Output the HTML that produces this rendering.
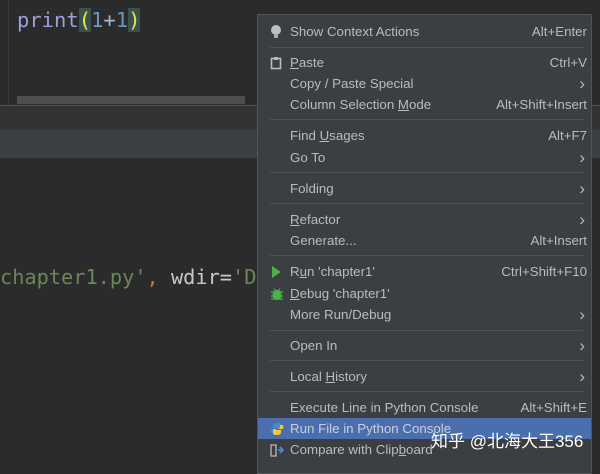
<html><head><style>
body{margin:0;width:600px;height:465px;overflow:hidden;background:#2b2b2b;position:relative;font-family:"Liberation Sans",sans-serif}
.mono{font-family:"DejaVu Sans Mono","Liberation Mono",monospace;position:absolute}
#menu{position:absolute;left:257px;top:14px;width:335px;height:460px;background:#3c3f41;border:1px solid #515355;box-sizing:border-box}
.it{position:absolute;left:0;width:333px;height:21px;line-height:21px;color:#bbbbbb;font-size:13.3px}
.it .t{position:absolute;left:32px}
.it .s{position:absolute;right:4px}
.it .a{position:absolute;right:6px;font-size:17px;top:0px}
.sep{position:absolute;left:12px;right:8px;height:1px;background:#515355}
.ic{position:absolute;left:12px;top:4px}
u{text-decoration:underline}
</style></head><body>
<div style="position:absolute;left:0;top:0;width:600px;height:105px;background:#2b2b2b"></div>
<div style="position:absolute;left:8px;top:0;width:1px;height:105px;background:#3a3a3a"></div>
<div style="position:absolute;left:17px;top:96px;width:228px;height:8px;background:#4e4e4e"></div>
<div style="position:absolute;left:0;top:105px;width:600px;height:1px;background:#555"></div>
<div style="position:absolute;left:0;top:106px;width:600px;height:24px;background:#313335"></div>
<div style="position:absolute;left:0;top:130px;width:600px;height:28px;background:#3c3f41"></div>
<div class="mono" style="left:17px;top:8px;font-size:20.5px;color:#9e9edb;white-space:pre">print<span style="color:#e8e843;background:#3b514d">(</span><span style="color:#6897bb">1</span><span style="color:#a9b7c6">+</span><span style="color:#6897bb">1</span><span style="color:#e8e843;background:#3b514d">)</span></div>
<div class="mono" style="left:0;top:265px;font-size:20.3px;color:#6a8759;white-space:pre">chapter1.py'<span style="color:#cc7832">,</span> <span style="color:#c8c8c8">wdir=</span>'D</div>
<div id="menu">
<div class="it" style="top:6px"><svg class="ic" width="12" height="14"><circle cx="6" cy="5" r="5" fill="#c0c0c0"/><rect x="4" y="10" width="4" height="3" fill="#aaa"/></svg><span class="t">Show Context Actions</span><span class="s">Alt+Enter</span></div>
<div class="sep" style="top:32px"></div>
<div class="it" style="top:37px"><svg class="ic" width="12" height="14"><rect x="1.5" y="2.5" width="9" height="10" fill="none" stroke="#bbb" stroke-width="1.6"/><rect x="4" y="1" width="4" height="3" fill="#bbb"/></svg><span class="t"><u>P</u>aste</span><span class="s">Ctrl+V</span></div>
<div class="it" style="top:58px"><span class="t">Copy / Paste Special</span><span class="a">›</span></div>
<div class="it" style="top:79px"><span class="t">Column Selection <u>M</u>ode</span><span class="s">Alt+Shift+Insert</span></div>
<div class="sep" style="top:104px"></div>
<div class="it" style="top:110px"><span class="t">Find <u>U</u>sages</span><span class="s">Alt+F7</span></div>
<div class="it" style="top:132px"><span class="t">Go To</span><span class="a">›</span></div>
<div class="sep" style="top:157px"></div>
<div class="it" style="top:163px"><span class="t">Folding</span><span class="a">›</span></div>
<div class="sep" style="top:188px"></div>
<div class="it" style="top:194px"><span class="t"><u>R</u>efactor</span><span class="a">›</span></div>
<div class="it" style="top:215px"><span class="t">Generate...</span><span class="s">Alt+Insert</span></div>
<div class="sep" style="top:240px"></div>
<div class="it" style="top:246px"><svg class="ic" width="12" height="14"><path d="M2 1L11 7L2 13Z" fill="#4cb04c"/></svg><span class="t">R<u>u</u>n 'chapter1'</span><span class="s">Ctrl+Shift+F10</span></div>
<div class="it" style="top:268px"><svg class="ic" width="14" height="14"><ellipse cx="7" cy="8" rx="4.5" ry="5" fill="#4cb04c"/><path d="M1 5H13M1 9H13M1 12H13M4 2L6 4M10 2L8 4" stroke="#4cb04c" stroke-width="1.3"/></svg><span class="t"><u>D</u>ebug 'chapter1'</span></div>
<div class="it" style="top:289px"><span class="t">More Run/Debug</span><span class="a">›</span></div>
<div class="sep" style="top:315px"></div>
<div class="it" style="top:320px"><span class="t">Open In</span><span class="a">›</span></div>
<div class="sep" style="top:345px"></div>
<div class="it" style="top:351px"><span class="t">Local <u>H</u>istory</span><span class="a">›</span></div>
<div class="sep" style="top:376px"></div>
<div class="it" style="top:382px"><span class="t">Execute Line in Python Console</span><span class="s">Alt+Shift+E</span></div>
<div class="it" style="top:403px;background:#4b6eaf;color:#c8d0dc"><svg class="ic" width="14" height="14"><path d="M7 1C3 1 3 3 3 4V6H8V7H2C0 7 0 10 2 11H4V9C4 8 5 7 7 7H10C11 7 11 6 11 5V3C11 1 9 1 7 1Z" fill="#4a8ad0"/><path d="M7 13C11 13 11 11 11 10V8H6V7H12C14 7 14 4 12 3H10V5C10 6 9 7 7 7H4C3 7 3 8 3 9V11C3 13 5 13 7 13Z" fill="#f0c93c"/></svg><span class="t">Run File in Python Console</span></div>
<div class="it" style="top:424px"><svg class="ic" width="14" height="14"><path d="M1 2H6V13H1Z" fill="none" stroke="#bbb" stroke-width="1.3"/><path d="M8 7L13 7M10 4L13 7L10 10" stroke="#4a8ad0" stroke-width="1.8" fill="none"/></svg><span class="t">Compare with Clip<u>b</u>oard</span></div>
</div>
<div style="position:absolute;left:431px;top:427px;font-family:'Liberation Sans','Noto Sans CJK SC',sans-serif;font-size:17px;color:#fff;white-space:pre">知乎 @北海大王356</div>
</body></html>
